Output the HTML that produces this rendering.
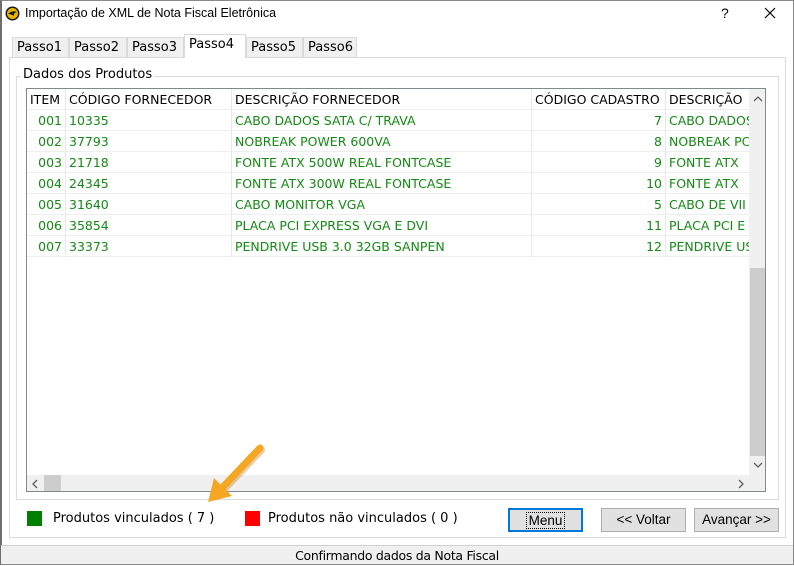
<!DOCTYPE html>
<html><head><meta charset="utf-8"><style>
*{box-sizing:border-box;margin:0;padding:0}
body{width:794px;height:565px;position:relative;background:#fff;overflow:hidden;font-family:"DejaVu Sans",Verdana,sans-serif;font-size:12.5px;color:#000}
.a{position:absolute}
.win{left:0;top:0;width:794px;height:565px;border:1px solid #8a8a8a;border-left:2px solid #6e6e6e}
.title{left:25px;top:6px;font-family:"Liberation Sans",sans-serif;font-size:12.5px}
.tab{top:37px;height:21px;border:1px solid #d9d9d9;background:#f0f0f0;font-size:13px;padding:2px 0 0 4px}
.panel{left:9px;top:57px;width:777px;height:481px;border:1px solid #d9d9d9;background:#fff}
.grp{left:16px;top:76px;width:763px;height:424px;border:1px solid #dcdcdc}
.grid{left:26px;top:88px;width:740px;height:404px;border:1px solid #828790;background:#fff;overflow:hidden}
.c{position:absolute;height:21px;line-height:22px;white-space:nowrap;overflow:hidden;font-size:12.5px;border-right:1px solid #e8e8e8;border-bottom:1px solid #eee}
.g{color:#138a13}
.r{text-align:right;padding-right:3px}
.btn{top:508px;height:24px;border:1px solid #adadad;background:#e1e1e1;font-family:"Liberation Sans",sans-serif;font-size:13.5px;text-align:center;line-height:22px}
</style></head><body>
<div class="a win"></div>
<svg class="a" style="left:5px;top:6px" width="15" height="15"><circle cx="7.5" cy="7.5" r="7" fill="#1a1a1a"/><circle cx="7.5" cy="7.5" r="5.5" fill="#e8b400"/><path d="M3 8 Q7 4 12 6 Q8 7 9 10 Q6 8 3 8Z" fill="#1a1a1a"/></svg>
<div class="a title">Importação de XML de Nota Fiscal Eletrônica</div>
<div class="a" style="left:721px;top:5px;font-family:'Liberation Sans';font-size:14px">?</div>
<svg class="a" style="left:764px;top:7px" width="12" height="12"><path d="M1 1L11 11M11 1L1 11" stroke="#000" stroke-width="1.2"/></svg>
<div class="a panel"></div>
<div class="a tab" style="left:12px;width:57px">Passo1</div>
<div class="a tab" style="left:69px;width:58px">Passo2</div>
<div class="a tab" style="left:127px;width:57px">Passo3</div>
<div class="a tab" style="left:246px;width:57px">Passo5</div>
<div class="a tab" style="left:303px;width:54px">Passo6</div>
<div class="a tab" style="left:184px;top:34px;height:24px;width:62px;background:#fff;border-bottom:none;padding-top:2px">Passo4</div>
<div class="a grp"></div>
<div class="a" style="left:21px;top:67px;background:#fff;padding:0 2px;font-size:13px">Dados dos Produtos</div>
<div class="a grid">
<div id="rows"></div>
<div class="a" style="left:722px;top:0;width:17px;height:386px;background:#f0f0f0"></div>
<div class="a" style="left:723px;top:179px;width:15px;height:188px;background:#cdcdcd"></div>
<svg class="a" style="left:726px;top:6px" width="10" height="8"><path d="M1 6L5 2L9 6" fill="none" stroke="#606060" stroke-width="1.3"/></svg>
<svg class="a" style="left:726px;top:372px" width="10" height="8"><path d="M1 2L5 6L9 2" fill="none" stroke="#606060" stroke-width="1.3"/></svg>
<div class="a" style="left:0;top:386px;width:722px;height:17px;background:#f0f0f0"></div>
<div class="a" style="left:17px;top:386px;width:17px;height:17px;background:#cdcdcd"></div>
<svg class="a" style="left:4px;top:390px" width="8" height="10"><path d="M6 1L2 5L6 9" fill="none" stroke="#606060" stroke-width="1.3"/></svg>
<svg class="a" style="left:710px;top:390px" width="8" height="10"><path d="M2 1L6 5L2 9" fill="none" stroke="#606060" stroke-width="1.3"/></svg>
<div class="a" style="left:722px;top:386px;width:17px;height:17px;background:#f0f0f0"></div>
</div>
<svg class="a" style="left:200px;top:440px" width="70" height="65"><path d="M60 8 L20 50" stroke="#c07800" stroke-width="8" stroke-linecap="round" opacity=".35" transform="translate(1,2)"/><path d="M60 8 L20 50" stroke="#f5a623" stroke-width="7" stroke-linecap="round"/><path d="M8 62 L14 38 L32 56Z" fill="#f5a623"/></svg>
<div class="a" style="left:27px;top:511px;width:15px;height:15px;background:#008000"></div>
<div class="a" style="left:53px;top:511px;font-size:13px">Produtos vinculados ( 7 )</div>
<div class="a" style="left:245px;top:511px;width:15px;height:15px;background:#f00"></div>
<div class="a" style="left:268px;top:511px;font-size:13px">Produtos não vinculados ( 0 )</div>
<div class="a btn" style="left:508px;width:75px;border:2px solid #0078d7"><span style="outline:1px dotted #000;padding:0 2px">Menu</span></div>
<div class="a btn" style="left:601px;width:85px">&lt;&lt; Voltar</div>
<div class="a btn" style="left:694px;width:85px">Avançar &gt;&gt;</div>
<div class="a" style="left:1px;top:545px;width:792px;height:19px;background:#f0f0f0;border-top:1px solid #d0d0d0;text-align:center;font-family:'DejaVu Sans';font-size:12.5px;line-height:20px;letter-spacing:-0.3px">Confirmando dados da Nota Fiscal</div>
<script>
var cols=[[0,39],[39,166],[205,300],[505,134],[639,90]];
var hdr=["ITEM","CÓDIGO FORNECEDOR","DESCRIÇÃO FORNECEDOR","CÓDIGO CADASTRO","DESCRIÇÃO"];
var d=[["001","10335","CABO DADOS SATA C/ TRAVA","7","CABO DADOS"],["002","37793","NOBREAK POWER 600VA","8","NOBREAK PC"],["003","21718","FONTE ATX 500W REAL FONTCASE","9","FONTE ATX"],["004","24345","FONTE ATX 300W REAL FONTCASE","10","FONTE ATX"],["005","31640","CABO MONITOR VGA","5","CABO DE VII"],["006","35854","PLACA PCI EXPRESS VGA E DVI","11","PLACA PCI E"],["007","33373","PENDRIVE USB 3.0 32GB SANPEN","12","PENDRIVE US"]];
var h="";
hdr.forEach(function(t,i){h+='<div class="c" style="left:'+cols[i][0]+'px;top:0;width:'+cols[i][1]+'px;padding-left:3px">'+t+'</div>'});
d.forEach(function(r,j){r.forEach(function(t,i){var cl=(i==0||i==3)?'c g r':'c g';h+='<div class="'+cl+'" style="left:'+cols[i][0]+'px;top:'+(21*(j+1))+'px;width:'+cols[i][1]+'px;'+((i==0||i==3)?'':'padding-left:3px')+'">'+t+'</div>'})});
document.getElementById("rows").innerHTML=h;
</script>
</body></html>
